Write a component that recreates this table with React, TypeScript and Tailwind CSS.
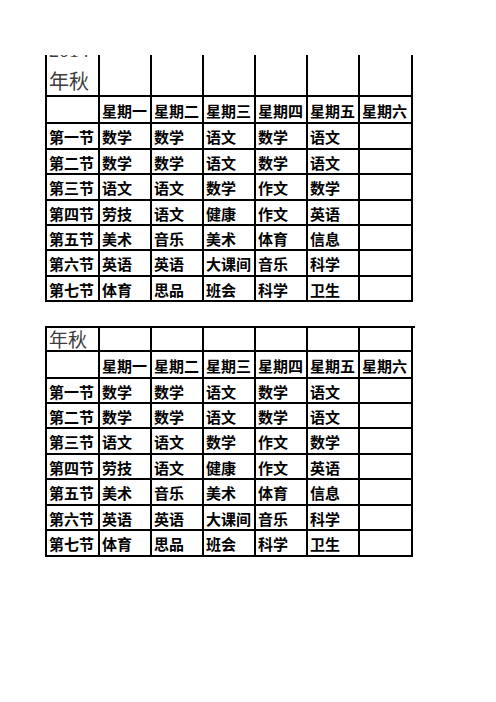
const days = ['星期一', '星期二', '星期三', '星期四', '星期五', '星期六'];

const lessons: { name: string; row: string[] }[] = [
  { name: '第一节', row: ['数学', '数学', '语文', '数学', '语文', ''] },
  { name: '第二节', row: ['数学', '数学', '语文', '数学', '语文', ''] },
  { name: '第三节', row: ['语文', '语文', '数学', '作文', '数学', ''] },
  { name: '第四节', row: ['劳技', '语文', '健康', '作文', '英语', ''] },
  { name: '第五节', row: ['美术', '音乐', '美术', '体育', '信息', ''] },
  { name: '第六节', row: ['英语', '英语', '大课间', '音乐', '科学', ''] },
  { name: '第七节', row: ['体育', '思品', '班会', '科学', '卫生', ''] },
];

const cols = 'grid grid-cols-[53px_52px_52px_52px_52px_52px_53px]';
const cell = 'border-r-2 border-b-2 border-black flex items-center pl-[2px] pt-[1px] overflow-hidden whitespace-nowrap';

function Timetable({ titleHeight, titleText, rowHeights, showYear }: { titleHeight: string; titleText: string; rowHeights: string[]; showYear: boolean }) {
  return (
    <div className="w-[370px] border-l-2 border-t-2 border-black font-['Noto_Sans_CJK_SC',sans-serif] text-[15px] leading-none text-black">
      {/* title row */}
      <div className={`${cols} ${titleHeight}`}>
        <div className={`border-r-2 border-b-2 border-black flex flex-col justify-end pl-[2px] ${titleText} font-normal text-[#3c3c3c]`}>
          {showYear && <span className="mb-[9px] font-['Liberation_Serif',serif]">2014</span>}
          <span>年秋</span>
        </div>
        {days.map((d) => (
          <div key={d} className="border-r-2 border-b-2 border-black" />
        ))}
      </div>
      {/* header row */}
      <div className={`${cols} h-[27px]`}>
        <div className={cell} />
        {days.map((d) => (
          <div key={d} className={`${cell} font-bold`}>{d}</div>
        ))}
      </div>
      {lessons.map((l, i) => (
        <div key={l.name} className={`${cols} ${rowHeights[i]}`}>
          <div className={`${cell} font-bold`}>{l.name}</div>
          {l.row.map((s, j) => (
            <div key={j} className={`${cell} font-bold`}>{s}</div>
          ))}
        </div>
      ))}
    </div>
  );
}

export default function App() {
  return (
    <div className="w-[496px] h-[702px] bg-white">
      <div className="pt-[55px] pl-[45px]">
        {/* first sheet: top of the title cell is scrolled out of view */}
        <div className="overflow-hidden">
          <div className="-mt-[20px]">
            <Timetable
              titleHeight="h-[60px]"
              titleText="pb-[3px] text-[20px] leading-[22px]"
              showYear
              rowHeights={['h-[26px]', 'h-[25px]', 'h-[26px]', 'h-[25px]', 'h-[25px]', 'h-[26px]', 'h-[25px]']}
            />
          </div>
        </div>
        <div className="mt-[24px]">
          <Timetable
            titleHeight="h-[24px]"
            titleText="pb-0 text-[19px] leading-[22px]"
            showYear={false}
            rowHeights={['h-[25px]', 'h-[25px]', 'h-[26px]', 'h-[25px]', 'h-[26px]', 'h-[25px]', 'h-[26px]']}
          />
        </div>
      </div>
    </div>
  );
}
